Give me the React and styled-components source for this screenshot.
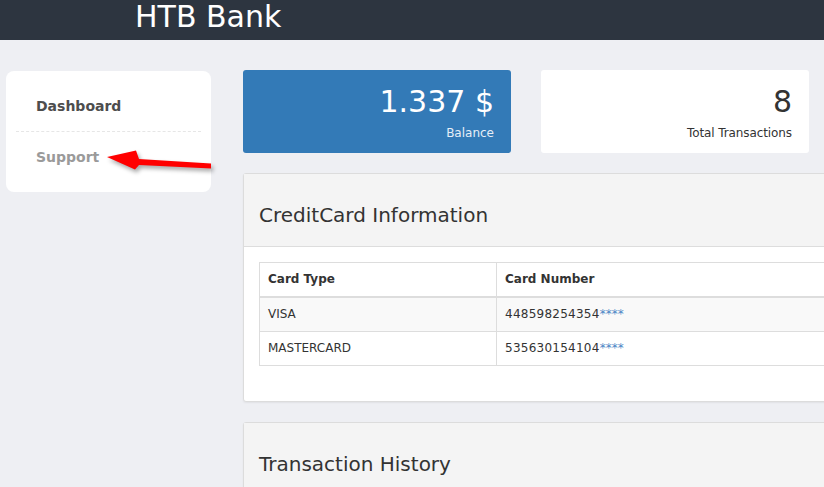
import React from 'react';
import styled, { createGlobalStyle } from 'styled-components';

const GlobalStyle = createGlobalStyle`
  html, body {
    margin: 0;
    padding: 0;
    overflow: hidden;
  }
  body {
    background: #eeeff3;
    font-family: "DejaVu Sans", Verdana, sans-serif;
    color: #333;
  }
`;

const Page = styled.div`
  position: relative;
  width: 1200px;
  min-height: 487px;
`;

const TopBar = styled.header`
  height: 40px;
  background: #2d3540;
  padding-left: 135px;
`;

const Brand = styled.div`
  color: #fff;
  font-size: 30px;
  line-height: 34px;
`;

const Layout = styled.div`
  display: flex;
  align-items: flex-start;
  padding: 30px 0 0 6px;
`;

const Sidebar = styled.nav`
  width: 185px;
  margin-top: 1px;
  padding: 10px;
  background: #fff;
  border-radius: 8px;
`;

const NavItem = styled.div`
  padding: 15px 20px;
  font-size: 14px;
  line-height: 20px;
  font-weight: bold;
  color: ${p => (p.$active ? '#4d4d4d' : '#9a9a9a')};
  border-bottom: ${p => (p.$last ? 'none' : '1px dashed #e6e6e6')};
`;

const Main = styled.main`
  width: 864px;
  margin-left: 32px;
  display: flex;
  flex-direction: column;
  gap: 20px;
`;

const StatRow = styled.div`
  display: grid;
  grid-template-columns: repeat(3, 268px);
  gap: 30px;
`;

const StatCard = styled.div`
  height: 83px;
  box-sizing: border-box;
  padding: 15px 17px 10px;
  border-radius: 3px;
  text-align: right;
  background: ${p => (p.$primary ? '#337ab7' : '#fff')};
  color: ${p => (p.$primary ? '#fff' : '#333')};
`;

const StatValue = styled.div`
  font-size: 30px;
  line-height: 34px;
`;

const StatLabel = styled.div`
  margin-top: 6px;
  font-size: 12px;
  line-height: 17px;
  letter-spacing: ${p => (p.$primary ? '0' : '-0.1px')};
  color: ${p => (p.$primary ? '#e6eef7' : '#333')};
`;

const Panel = styled.section`
  background: #fff;
  border: 1px solid #dcdcdc;
  border-radius: 3px;
  box-shadow: 0 1px 2px rgba(0, 0, 0, 0.06);
`;

const PanelHead = styled.div`
  background: #f4f4f4;
  padding: 27px 15px 17px;
  border-bottom: ${p => (p.$open ? '1px solid #dddddd' : 'none')};
`;

const PanelTitle = styled.h3`
  margin: 0;
  font-size: 20px;
  line-height: 28px;
  font-weight: normal;
  color: #333;
`;

const PanelBody = styled.div`
  padding: 15px 15px;
`;

const CardTable = styled.table`
  width: 100%;
  border-collapse: collapse;
  margin-bottom: 20px;
  font-size: 12px;
  line-height: 17px;
  color: #333;

  th, td {
    border: 1px solid #ddd;
    padding: 8px;
    text-align: left;
  }
  th {
    font-weight: bold;
    border-bottom-width: 2px;
  }
  th:first-child, td:first-child {
    width: 220px;
  }
  tbody tr:nth-child(odd) {
    background: #f9f9f9;
  }
`;

const Digits = styled.span`
  letter-spacing: 0.25px;
`;

const Mask = styled.span`
  color: #4a86c5;
`;

const Arrow = styled.svg`
  position: absolute;
  left: 100px;
  top: 145px;
  overflow: visible;
  filter: drop-shadow(2px 3px 2px rgba(0, 0, 0, 0.35));
`;

const cards = [
  { type: 'VISA', number: '448598254354' },
  { type: 'MASTERCARD', number: '535630154104' },
];

export default function App() {
  return (
    <Page>
      <GlobalStyle />
      <TopBar>
        <Brand>HTB Bank</Brand>
      </TopBar>
      <Layout>
        <Sidebar>
          <NavItem $active>Dashboard</NavItem>
          <NavItem $last>Support</NavItem>
        </Sidebar>
        <Main>
          <StatRow>
            <StatCard $primary>
              <StatValue>1.337 $</StatValue>
              <StatLabel $primary>Balance</StatLabel>
            </StatCard>
            <StatCard>
              <StatValue>8</StatValue>
              <StatLabel>Total Transactions</StatLabel>
            </StatCard>
          </StatRow>
          <Panel>
            <PanelHead $open>
              <PanelTitle>CreditCard Information</PanelTitle>
            </PanelHead>
            <PanelBody>
              <CardTable>
                <thead>
                  <tr>
                    <th>Card Type</th>
                    <th>Card Number</th>
                  </tr>
                </thead>
                <tbody>
                  {cards.map(c => (
                    <tr key={c.number}>
                      <td>{c.type}</td>
                      <td><Digits>{c.number}</Digits><Mask>****</Mask></td>
                    </tr>
                  ))}
                </tbody>
              </CardTable>
            </PanelBody>
          </Panel>
          <Panel>
            <PanelHead>
              <PanelTitle>Transaction History</PanelTitle>
            </PanelHead>
            <PanelBody />
          </Panel>
        </Main>
      </Layout>
      {/* red annotation arrow pointing at Support */}
      <Arrow width="120" height="35" viewBox="0 0 120 35">
        <polygon
          points="7,12 36,5.5 39,14 111,18.5 111,23.5 39,20 35,24.5"
          fill="#ff0000"
        />
      </Arrow>
    </Page>
  );
}
